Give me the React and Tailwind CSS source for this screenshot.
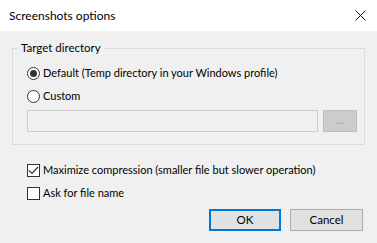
import { useState } from 'react';

// Windows 10 style dialog: "Screenshots options"

function Radio({ checked, label, onClick }) {
  return (
    <div onClick={onClick} className="flex items-center h-[16px] gap-[3px] cursor-default">
      <span className="w-[13px] h-[13px] rounded-full border border-[#333333] bg-white flex items-center justify-center shrink-0">
        {checked && <span className="w-[7px] h-[7px] rounded-full bg-[#333333]" />}
      </span>
      <span className="leading-[16px]">{label}</span>
    </div>
  );
}

function Check({ checked, label, onClick }) {
  return (
    <div onClick={onClick} className="flex items-center h-[16px] gap-[3px] cursor-default">
      <span className="w-[13px] h-[13px] border border-[#333333] bg-white flex items-center justify-center shrink-0">
        {checked && (
          <svg width="11" height="11" viewBox="0 0 11 11" fill="none">
            <path d="M1 5.5 L4 8.5 L10 2" stroke="#333333" strokeWidth="1.2" />
          </svg>
        )}
      </span>
      <span className="leading-[16px]">{label}</span>
    </div>
  );
}

export default function App() {
  const [mode, setMode] = useState('default');
  const [maximize, setMaximize] = useState(true);
  const [askName, setAskName] = useState(false);

  return (
    <div className="w-[377px] h-[243px] bg-[#f0f0f0] flex flex-col text-[11px] text-black font-['Segoe_UI','Lato','Liberation_Sans',sans-serif]">
      {/* Title bar */}
      <div className="h-[31px] bg-white flex items-center justify-between pl-[9px] pr-[11px] shrink-0">
        <span className="leading-[16px] text-[12px]">Screenshots options</span>
        <svg width="11" height="11" viewBox="0 0 11 11" fill="none">
          <path d="M0.5 0.5 L10.5 10.5 M10.5 0.5 L0.5 10.5" stroke="#111111" strokeWidth="1" />
        </svg>
      </div>

      <div className="flex flex-col px-[12px] pt-[9px]">
        {/* Target directory group */}
        <fieldset className="border border-[#dcdcdc]">
          <legend className="ml-[5px] px-[3px] leading-[16px] text-[11.5px]">Target directory</legend>
          <div className="flex flex-col pl-[14px] pr-[7px] pb-[12px]">
            <div className="mt-[9px]">
              <Radio checked={mode === 'default'} label="Default (Temp directory in your Windows profile)" onClick={() => setMode('default')} />
            </div>
            <div className="mt-[7px]">
              <Radio checked={mode === 'custom'} label="Custom" onClick={() => setMode('custom')} />
            </div>
            <div className="flex items-center gap-[5px] mt-[6px]">
              <div className="flex-1 h-[22px] border border-[#cccccc] bg-[#f0f0f0]" />
              <div className="w-[34px] h-[22px] border border-[#bfbfbf] bg-[#cccccc] flex items-center justify-center text-[#9a9a9a] leading-none pb-[3px]">
                ...
              </div>
            </div>
          </div>
        </fieldset>

        {/* Options */}
        <div className="flex flex-col pl-[15px] mt-[17px] gap-[7px]">
          <Check checked={maximize} label="Maximize compression (smaller file but slower operation)" onClick={() => setMaximize(!maximize)} />
          <Check checked={askName} label="Ask for file name" onClick={() => setAskName(!askName)} />
        </div>

        {/* Buttons */}
        <div className="flex justify-end gap-[9px] mt-[8px] pr-[2px]">
          <button className="w-[72px] h-[22px] border-2 border-[#0078d7] bg-[#e1e1e1] leading-none text-[11.5px]">OK</button>
          <button className="w-[73px] h-[22px] border border-[#adadad] bg-[#e1e1e1] leading-none text-[11.5px]">Cancel</button>
        </div>
      </div>
    </div>
  );
}
